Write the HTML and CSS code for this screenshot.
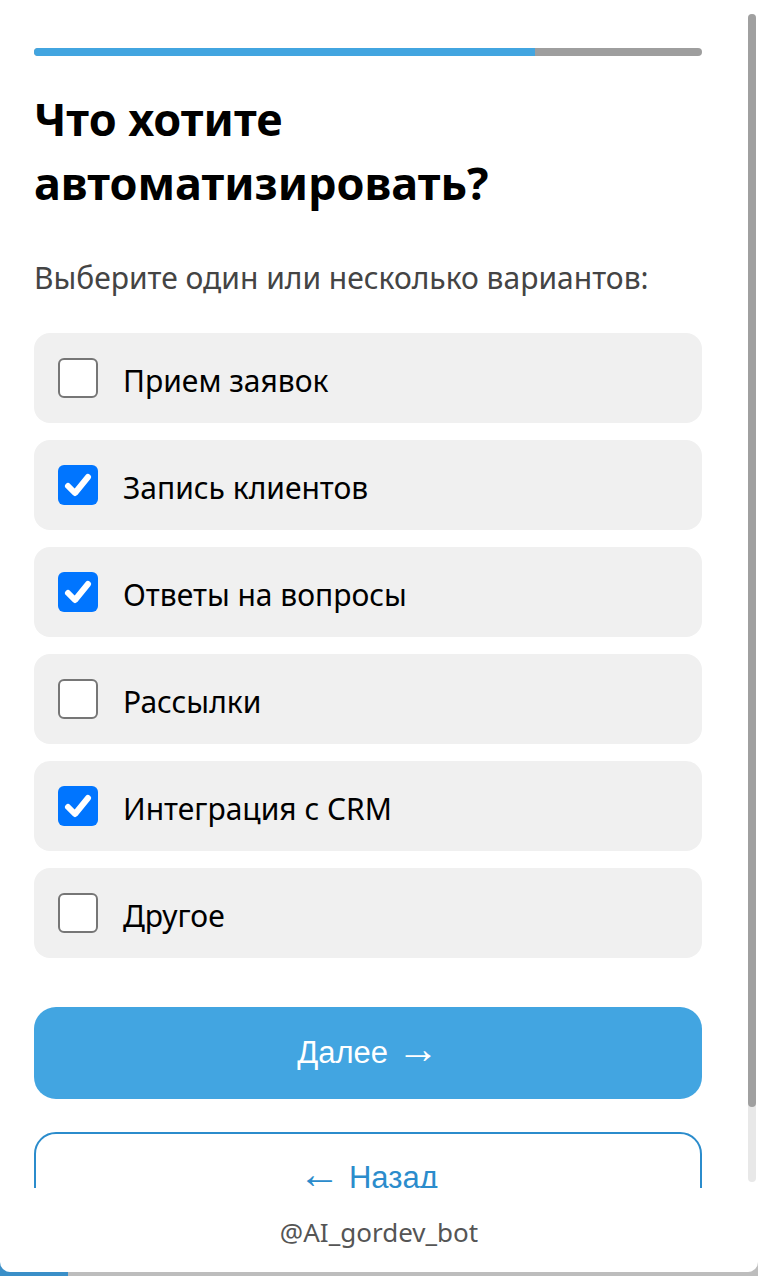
FILE: index.html
```html
<!DOCTYPE html>
<html lang="ru">
<head>
<meta charset="utf-8">
<title>Что хотите автоматизировать?</title>
<link rel="stylesheet" href="styles.css">
</head>
<body>
<div class="app">
  <div class="scroll">
    <div class="progress"><div class="progress-fill" style="width:75%"></div></div>
    <h1 class="title">Что хотите<br>автоматизировать?</h1>
    <p class="subtitle">Выберите один или несколько вариантов:</p>
    <div class="options">
      <div class="option"><span class="box"></span><span class="label">Прием заявок</span></div>
      <div class="option"><span class="box checked"><svg viewBox="0 0 40 40" width="40" height="40"><path d="M10 21 L17 28 L30 12" fill="none" stroke="#fff" stroke-width="6" stroke-linecap="round" stroke-linejoin="round"/></svg></span><span class="label">Запись клиентов</span></div>
      <div class="option"><span class="box checked"><svg viewBox="0 0 40 40" width="40" height="40"><path d="M10 21 L17 28 L30 12" fill="none" stroke="#fff" stroke-width="6" stroke-linecap="round" stroke-linejoin="round"/></svg></span><span class="label">Ответы на вопросы</span></div>
      <div class="option"><span class="box"></span><span class="label">Рассылки</span></div>
      <div class="option"><span class="box checked"><svg viewBox="0 0 40 40" width="40" height="40"><path d="M10 21 L17 28 L30 12" fill="none" stroke="#fff" stroke-width="6" stroke-linecap="round" stroke-linejoin="round"/></svg></span><span class="label">Интеграция с CRM</span></div>
      <div class="option"><span class="box"></span><span class="label">Другое</span></div>
    </div>
    <button class="btn btn-primary">Далее <span class="arrow">→</span></button>
    <button class="btn btn-secondary"><span class="arrow">←</span> Назад</button>
  </div>
  <div class="scrollbar"><div class="scrollbar-thumb"></div></div>
  <div class="footer">@AI_gordev_bot</div>
</div>
<div class="under">
  <span class="under-blue"></span>
</div>
</body>
</html>
```
FILE: styles.css
```css
html, body {
  margin: 0;
  padding: 0;
}
body {
  background: #bdbdbd;
  font-family: "Noto Sans", "Open Sans", sans-serif;
  height: 1276px;
  overflow: hidden;
  position: relative;
}
.app {
  height: 1272px;
  background: #fff;
  border-radius: 0 0 10px 10px;
  display: flex;
  flex-direction: column;
  overflow: hidden;
  position: relative;
  z-index: 1;
}
.scroll {
  height: 1188px;
  flex: none;
  overflow: hidden;
  padding: 48px 56px 45px 34px;
  box-sizing: border-box;
}
.scrollbar {
  position: absolute;
  left: 748px;
  top: 14px;
  width: 8px;
  height: 1168px;
  background: #e8e8e8;
  border-radius: 4px;
}
.scrollbar-thumb {
  height: 1093px;
  background: #a0a0a0;
  border-radius: 4px;
}
.progress {
  height: 8px;
  background: #9e9e9e;
  border-radius: 4px;
  overflow: hidden;
  width: 668px;
}
.progress-fill {
  height: 100%;
  background: #42a5e0;
}
.title {
  margin: 31px 0 0 0;
  font-size: 45px;
  line-height: 64px;
  font-weight: 700;
  color: #000;
}
.subtitle {
  margin: 43px 0 0 0;
  font-size: 30px;
  line-height: 40px;
  color: #444;
}
.options {
  margin-top: 35px;
  display: flex;
  flex-direction: column;
  gap: 17px;
  width: 668px;
}
.option {
  height: 90px;
  background: #f0f0f0;
  border-radius: 16px;
  display: flex;
  align-items: center;
  padding-left: 24px;
  gap: 25px;
}
.box {
  width: 40px;
  height: 40px;
  box-sizing: border-box;
  border: 2px solid #767676;
  border-radius: 6px;
  background: #fff;
  flex: none;
  display: flex;
}
.box.checked {
  border: none;
  background: #0075ff;
}
.label {
  font-size: 30px;
  color: #000;
  padding-top: 4px;
}
.btn {
  display: block;
  width: 668px;
  height: 92px;
  border-radius: 22px;
  font-family: "Liberation Sans", Arial, sans-serif;
  font-size: 31px;
  line-height: 36px;
  cursor: pointer;
  box-sizing: border-box;
}
.arrow {
  font-family: "Liberation Sans", Arial, sans-serif;
  font-size: 42px;
  line-height: 20px;
}
.btn-primary {
  margin-top: 49px;
  background: #42a5e1;
  color: #fff;
  border: none;
}
.btn-secondary {
  margin-top: 33px;
  background: #fff;
  color: #2b8ccc;
  border: 2px solid #2b8ccc;
}
.footer {
  flex: 1;
  display: flex;
  align-items: center;
  justify-content: center;
  font-size: 26px;
  color: #555;
  padding-top: 4px;
}
.under {
  position: absolute;
  left: 0;
  right: 0;
  bottom: 0;
  height: 14px;
}
.under-blue {
  position: absolute;
  left: 0;
  bottom: 0;
  width: 68px;
  height: 14px;
  background: #3a8fc8;
}
```
